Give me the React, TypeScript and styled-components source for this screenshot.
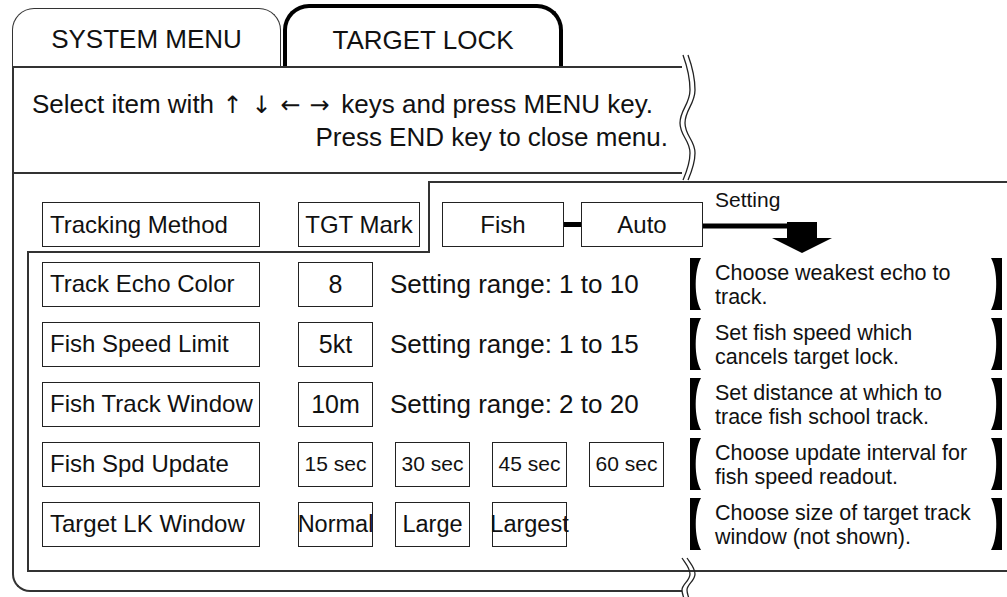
import React from 'react'
import styled, { createGlobalStyle } from 'styled-components'

const GlobalStyle = createGlobalStyle`
  html, body {
    margin: 0;
    padding: 0;
    background: #fff;
  }
  body {
    font-family: 'Liberation Sans', Arial, Helvetica, sans-serif;
    color: #111;
  }
  * {
    box-sizing: border-box;
  }
`

interface SettingRow {
  label: string
  values: string[]
  valueSize: number
  range?: string
  desc: [string, string]
}

const rows: SettingRow[] = [
  {
    label: 'Track Echo Color',
    values: ['8'],
    valueSize: 25,
    range: 'Setting range: 1 to 10',
    desc: ['Choose weakest echo to', 'track.'],
  },
  {
    label: 'Fish Speed Limit',
    values: ['5kt'],
    valueSize: 25,
    range: 'Setting range: 1 to 15',
    desc: ['Set fish speed which', 'cancels target lock.'],
  },
  {
    label: 'Fish Track Window',
    values: ['10m'],
    valueSize: 25,
    range: 'Setting range: 2 to 20',
    desc: ['Set distance at which to', 'trace fish school track.'],
  },
  {
    label: 'Fish Spd Update',
    values: ['15 sec', '30 sec', '45 sec', '60 sec'],
    valueSize: 21,
    desc: ['Choose update interval for', 'fish speed readout.'],
  },
  {
    label: 'Target LK Window',
    values: ['Normal', 'Large', 'Largest'],
    valueSize: 23.5,
    desc: ['Choose size of target track', 'window (not shown).'],
  },
]

// text presentation selector keeps the arrows out of the emoji font
const keyArrows = ['\u2191\uFE0E', '\u2193\uFE0E', '\u2190\uFE0E', '\u2192\uFE0E']

const wavePath =
  'M7,3 C11,14 14,26 14,38 C14,52 4,58 4,71 C4,84 14,88 14,101 C14,112 10,121 7,128'
const lowWavePath = 'M6,2 C10,8 14,12 14,18 C14,25 6,28 6,34 C6,38 8,41 8,44'

export default function App(): JSX.Element {
  return (
    <>
      <GlobalStyle />
      <Page>
        <TabRow>
          <Tab>SYSTEM MENU</Tab>
          <Tab $active>TARGET LOCK</Tab>
        </TabRow>
        <Window>
          <Header>
            <HeaderLine>
              Select item with
              {keyArrows.map((a) => (
                <ArrowKey key={a}>{a}</ArrowKey>
              ))}{' '}
              keys and press MENU key.
            </HeaderLine>
            <HeaderLine $right>Press END key to close menu.</HeaderLine>
          </Header>
          <Body>
            <Panel>
              <TopRow>
                <MethodCell>
                  <LabelBox>Tracking Method</LabelBox>
                  <OptionBox>TGT Mark</OptionBox>
                </MethodCell>
                <SubMenuCell>
                  <OptionBox>Fish</OptionBox>
                  <Connector />
                  <OptionBox>Auto</OptionBox>
                  <SettingLink>
                    <SettingLabel>Setting</SettingLabel>
                    <svg width="130" height="43" viewBox="0 0 130 43">
                      <rect x="0" y="13.5" width="86" height="5" fill="#000" />
                      <rect x="84" y="12" width="30" height="17" fill="#000" />
                      <polygon points="69,28 129,28 99,43" fill="#000" />
                    </svg>
                  </SettingLink>
                </SubMenuCell>
              </TopRow>
              <RowsArea>
                {rows.map((row) => (
                  <Row key={row.label}>
                    <LabelBox>{row.label}</LabelBox>
                    <ValueGroup>
                      {row.values.map((v) => (
                        <ValueBox key={v} $size={row.valueSize}>
                          {v}
                        </ValueBox>
                      ))}
                      {row.range ? <RangeText>{row.range}</RangeText> : null}
                    </ValueGroup>
                    <Description>
                      <Bracket />
                      <DescText>
                        {row.desc[0]}
                        <br />
                        {row.desc[1]}
                      </DescText>
                      <Bracket $right />
                    </Description>
                  </Row>
                ))}
              </RowsArea>
            </Panel>
          </Body>
          <WaveBreak $top={-16} $height={130}>
            <svg width="24" height="130" viewBox="0 0 24 130">
              <path d={wavePath} fill="none" stroke="#fff" strokeWidth="5" transform="translate(2.5,0)" />
              <path d={wavePath} fill="none" stroke="#222" strokeWidth="1.3" />
              <path d={wavePath} fill="none" stroke="#222" strokeWidth="1.3" transform="translate(5,0)" />
            </svg>
          </WaveBreak>
          <WaveBreak $top={488} $height={44}>
            <svg width="24" height="44" viewBox="0 0 24 44">
              <path d={lowWavePath} fill="none" stroke="#222" strokeWidth="1.3" />
              <path d={lowWavePath} fill="none" stroke="#222" strokeWidth="1.3" transform="translate(5,0)" />
            </svg>
          </WaveBreak>
        </Window>
      </Page>
    </>
  )
}

function Bracket({ $right }: { $right?: boolean }): JSX.Element {
  return (
    <BracketShape $right={$right} width="11" height="52" viewBox="0 0 11 52">
      <path d="M0,0 H11 C4,12 4,40 11,52 H0 Z" fill="#000" />
    </BracketShape>
  )
}

const Page = styled.div`
  position: relative;
  width: 1007px;
  height: 597px;
  overflow: hidden;
  padding: 4px 0 0 12px;
`

const TabRow = styled.div`
  display: flex;
  align-items: flex-end;
  height: 62px;
`

const Tab = styled.div<{ $active?: boolean }>`
  display: flex;
  align-items: center;
  justify-content: center;
  width: ${(p) => (p.$active ? 280 : 269)}px;
  height: ${(p) => (p.$active ? 62 : 58)}px;
  margin-left: ${(p) => (p.$active ? 2 : 0)}px;
  padding-top: ${(p) => (p.$active ? 6 : 4)}px;
  border: ${(p) => (p.$active ? '4px solid #000' : '1px solid #333')};
  border-bottom: none;
  border-radius: ${(p) => (p.$active ? '26px 26px 0 0' : '22px 22px 0 0')};
  font-size: 26px;
  white-space: nowrap;
`

const Window = styled.div`
  position: relative;
  width: 670px;
  border-top: 2px solid #333;
  border-left: 2px solid #333;
  border-bottom: 2px solid #333;
  border-bottom-left-radius: 18px;
`

const Header = styled.div`
  height: 106px;
  padding: 20px 14px 0 18px;
  border-bottom: 2px solid #333;
`

const HeaderLine = styled.div<{ $right?: boolean }>`
  font-size: 26px;
  line-height: 32px;
  white-space: nowrap;
  text-align: ${(p) => (p.$right ? 'right' : 'left')};
`

const ArrowKey = styled.span`
  display: inline-block;
  width: 29px;
  text-align: center;
  font-family: 'DejaVu Sans', 'Liberation Sans', sans-serif;
  font-size: 24px;
  color: #111;
  font-variant-emoji: text;

  &:first-child {
    margin-left: 4px;
  }
`

const Body = styled.div`
  padding: 7px 0 18px 13px;
`

const Panel = styled.div`
  width: 983px;
`

const TopRow = styled.div`
  display: flex;
  height: 72px;
`

const MethodCell = styled.div`
  display: flex;
  width: 403px;
  padding: 21px 0 0 15px;
  border-right: 2px solid #333;
  border-bottom: 2px solid #333;

  & > * + * {
    margin-left: 38px;
  }
`

const SubMenuCell = styled.div`
  display: flex;
  align-items: flex-start;
  flex: 1;
  padding-left: 12px;
  border-top: 2px solid #333;

  & > div:not(:last-child) {
    margin-top: 19px;
  }
`

const Box = styled.div`
  display: flex;
  align-items: center;
  height: 45px;
  border: 1px solid #222;
  background: #fff;
  white-space: nowrap;
  flex-shrink: 0;
`

const LabelBox = styled(Box)`
  width: 218px;
  padding-left: 7px;
  font-size: 24px;
`

const OptionBox = styled(Box)`
  width: 122px;
  justify-content: center;
  font-size: 24px;
`

const Connector = styled.div`
  width: 17px;
  height: 5px;
  margin-top: 39px !important;
  background: #000;
`

const SettingLink = styled.div`
  display: flex;
  flex-direction: column;
  width: 130px;
`

const SettingLabel = styled.div`
  margin: 6px 0 0 12px;
  font-size: 21px;
  line-height: 21px;
`

const RowsArea = styled.div`
  display: flex;
  flex-direction: column;
  gap: 8px;
  padding: 5px 0 20px 13px;
  border-left: 2px solid #333;
  border-bottom: 2px solid #333;
`

const Row = styled.div`
  display: flex;
  align-items: center;
  height: 52px;

  & > ${LabelBox} {
    margin-right: 38px;
  }
`

const ValueGroup = styled.div`
  display: flex;
  align-items: center;
  width: 392px;
`

const ValueBox = styled(Box)<{ $size: number }>`
  width: 75px;
  justify-content: center;
  font-size: ${(p) => p.$size}px;

  & + & {
    margin-left: 22px;
  }
`

const RangeText = styled.span`
  margin-left: 17px;
  font-size: 26px;
  white-space: nowrap;
`

const Description = styled.div`
  display: flex;
  align-items: stretch;
  width: 312px;
  height: 52px;
`

const DescText = styled.div`
  flex: 1;
  padding: 3px 0 0 14px;
  font-size: 21.5px;
  line-height: 24px;
  white-space: nowrap;
`

const BracketShape = styled.svg<{ $right?: boolean }>`
  display: block;
  flex-shrink: 0;
  transform: ${(p) => (p.$right ? 'scaleX(-1)' : 'none')};
`

const WaveBreak = styled.div<{ $top: number; $height: number }>`
  position: absolute;
  left: 662px;
  top: ${(p) => p.$top}px;
  width: 24px;
  height: ${(p) => p.$height}px;

  svg {
    display: block;
  }
`
